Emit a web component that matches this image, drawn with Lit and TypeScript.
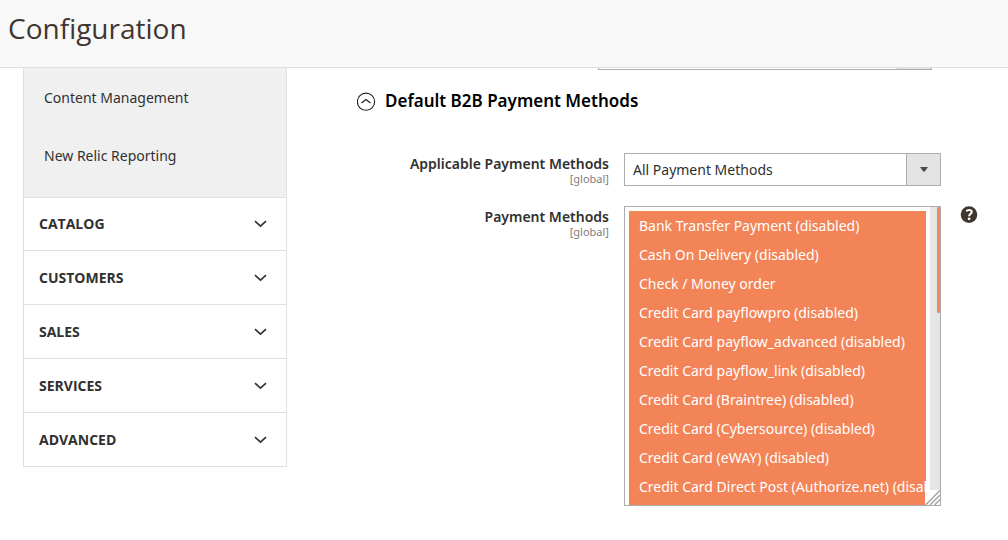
import { LitElement, html, css, svg } from "lit";
import { customElement } from "lit/decorators.js";

const SUBPAGES = ["Content Management", "New Relic Reporting"];
const SECTIONS = ["Catalog", "Customers", "Sales", "Services", "Advanced"];
const METHODS = [
  "Bank Transfer Payment (disabled)",
  "Cash On Delivery (disabled)",
  "Check / Money order",
  "Credit Card payflowpro (disabled)",
  "Credit Card payflow_advanced (disabled)",
  "Credit Card payflow_link (disabled)",
  "Credit Card (Braintree) (disabled)",
  "Credit Card (Cybersource) (disabled)",
  "Credit Card (eWAY) (disabled)",
  "Credit Card Direct Post (Authorize.net) (disabled)",
  "Credit Card (Authorize.net) (disabled)",
];

const chevron = svg`<path d="M1 1.2 L6.5 6.2 L12 1.2" fill="none" stroke="#303030" stroke-width="1.6"/>`;

@customElement("config-nav")
export class ConfigNav extends LitElement {
  static styles = css`
    :host {
      display: block;
      border: 1px solid #e0e0e0;
      border-top: 0;
      font-size: 14px;
    }
    .subpages {
      background: #f0f0f0;
      padding: 1px 0 12px;
    }
    .subpage {
      display: block;
      padding: 19px 20px;
      line-height: 20px;
      color: #303030;
      text-decoration: none;
    }
    .section {
      display: flex;
      align-items: center;
      justify-content: space-between;
      box-sizing: border-box;
      width: 100%;
      height: 54px;
      padding: 0 19px 0 15px;
      border: 0;
      border-top: 1px solid #e0e0e0;
      background: #fff;
      color: #303030;
      font-family: "Open Sans", "Noto Sans", sans-serif;
      font-size: 14px;
      font-weight: 700;
      line-height: 20px;
      text-transform: uppercase;
    }
    .section:first-of-type {
      height: 53px;
    }
    .chevron {
      width: 13px;
      height: 8px;
    }
  `;

  render() {
    return html`
      <div class="subpages">
        ${SUBPAGES.map((p) => html`<a class="subpage" href="#">${p}</a>`)}
      </div>
      ${SECTIONS.map(
        (s) => html`<button class="section" type="button" aria-expanded="false">
          ${s}<svg class="chevron" viewBox="0 0 13 8" aria-hidden="true">${chevron}</svg>
        </button>`
      )}
    `;
  }
}

@customElement("app-root")
export class AppRoot extends LitElement {
  static styles = css`
    :host {
      display: block;
      min-height: 100vh;
      background: #fff;
      color: #303030;
      font-family: "Noto Sans", "Open Sans", sans-serif;
      font-size: 14px;
    }
    .header {
      box-sizing: border-box;
      height: 68px;
      padding: 9px 8px 0;
      border-bottom: 1px solid #e0e0e0;
      background: #f8f8f8;
    }
    .page-title {
      margin: 0;
      color: #41362f;
      font-family: "Open Sans", "Noto Sans", sans-serif;
      font-size: 28px;
      font-weight: 400;
      line-height: 38px;
    }
    .body {
      display: grid;
      grid-template-columns: minmax(200px, 264px) minmax(0, 1fr);
      column-gap: 70px;
      align-items: start;
      padding: 0 31px 34px 23px;
    }
    .previous {
      display: flex;
      align-items: flex-end;
      height: 2px;
      margin: 0 45px 0 241px;
      overflow: hidden;
    }
    .section-title {
      margin: 19px 0 0;
      font-size: 17px;
      line-height: 24px;
      font-weight: 600;
    }
    .toggle {
      display: flex;
      align-items: center;
      gap: 9px;
      padding: 0;
      border: 0;
      background: none;
      color: #000;
      font: inherit;
    }
    .toggle-icon {
      width: 19px;
      height: 19px;
    }
    .fields {
      display: grid;
      grid-template-columns: minmax(0, 252px) minmax(0, 317px) 18px;
      column-gap: 15px;
      row-gap: 20px;
      margin-top: 40px;
    }
    .label {
      display: block;
      padding-top: 2px;
      text-align: right;
      font-weight: 600;
      line-height: 18px;
    }
    .scope {
      display: block;
      color: #808080;
      font-size: 11px;
      font-weight: 400;
      line-height: 11px;
    }
    .picker {
      position: relative;
      width: 100%;
    }
    .select {
      display: block;
      box-sizing: border-box;
      width: 100%;
      height: 33px;
      flex: none;
      padding: 0 40px 0 8px;
      border: 1px solid #adadad;
      border-radius: 0;
      appearance: none;
      background: linear-gradient(#adadad, #adadad) right 33px top / 1px 100% no-repeat,
        linear-gradient(#e3e3e3, #e3e3e3) right top / 33px 100% no-repeat, #fff;
      color: #303030;
      font: inherit;
    }
    .arrow {
      position: absolute;
      right: 13px;
      top: 14px;
      width: 8px;
      height: 5px;
      pointer-events: none;
    }
    .list {
      display: block;
      box-sizing: border-box;
      width: 100%;
      height: 300px;
      padding: 4px 14px 0 4px;
      border: 1px solid #adadad;
      border-radius: 0;
      background: #fff;
      color: #303030;
      font: inherit;
      overflow: hidden auto;
      scrollbar-width: none;
    }
    .option {
      box-sizing: border-box;
      height: 29px;
      min-height: 29px;
      padding: 5px 10px;
    }
    .option:checked {
      background: #f38458 linear-gradient(#f38458, #f38458);
      color: #fff !important;
    }
    .scrollbar {
      position: absolute;
      top: 1px;
      right: 1px;
      bottom: 16px;
      width: 10px;
      background: #e5e5e5;
      pointer-events: none;
    }
    .thumb {
      width: 3px;
      height: 106px;
      margin-left: auto;
      border-radius: 1px;
      background: #f0875e;
    }
    .grip {
      position: absolute;
      right: 1px;
      bottom: 1px;
      width: 15px;
      height: 15px;
      background: #fff;
    }
    .help {
      display: block;
      width: 18px;
      height: 18px;
      margin-left: 4px;
      padding: 0;
      border: 0;
      background: none;
    }
    .help-icon {
      display: block;
      width: 18px;
      height: 18px;
    }
  `;

  render() {
    return html`
      <header class="header"><h1 class="page-title">Configuration</h1></header>
      <div class="body">
        <config-nav></config-nav>
        <main>
          <div class="previous"><select class="select" aria-label="Setting"></select></div>
          <h2 class="section-title">
            <button class="toggle" type="button" aria-expanded="true">
              <svg class="toggle-icon" viewBox="0 0 19 19" fill="none" stroke="#222" aria-hidden="true">
                <circle cx="9" cy="9.7" r="8.6" stroke-width="1.1" />
                <path d="M4.5 11 L9 7.6 L13.5 11" stroke-width="1.3" />
              </svg>
              Default B2B Payment Methods
            </button>
          </h2>
          <div class="fields">
            <label class="label" for="applicable">Applicable Payment Methods<span class="scope">[global]</span></label>
            <div class="picker">
              <select class="select" id="applicable">
                <option>All Payment Methods</option>
                <option>Specific Payment Methods</option>
              </select>
              <svg class="arrow" viewBox="0 0 8 5" aria-hidden="true"><path d="M0 0H8L4.8 4.6H3.2Z" fill="#514943" /></svg>
            </div>
            <span></span>
            <label class="label" for="methods">Payment Methods<span class="scope">[global]</span></label>
            <div class="picker">
              <select class="list" id="methods" multiple>
                ${METHODS.map((m) => html`<option class="option" selected>${m}</option>`)}
              </select>
              <div class="scrollbar"><div class="thumb"></div></div>
              <svg class="grip" viewBox="0 0 15 15" stroke="#a6a6a6" stroke-width="1.5" aria-hidden="true">
                <path d="M0.5 15L15 0.5M5 15L15 5M9.5 15L15 9.5" />
              </svg>
            </div>
            <button class="help" type="button" aria-label="Help">
              <svg class="help-icon" viewBox="0 0 18 18" aria-hidden="true">
                <circle cx="9" cy="8.6" r="8.3" fill="#41362f" />
                <path d="M6.3 5.2Q7.6 3.9 9.1 4Q11.8 4.1 11.7 6.2Q11.6 7.3 10.2 8.2Q9.1 9 9.1 10.3" fill="none" stroke="#fff" stroke-width="2" />
                <circle cx="9.1" cy="12.8" r="1.4" fill="#fff" />
              </svg>
            </button>
          </div>
        </main>
      </div>
    `;
  }
}
